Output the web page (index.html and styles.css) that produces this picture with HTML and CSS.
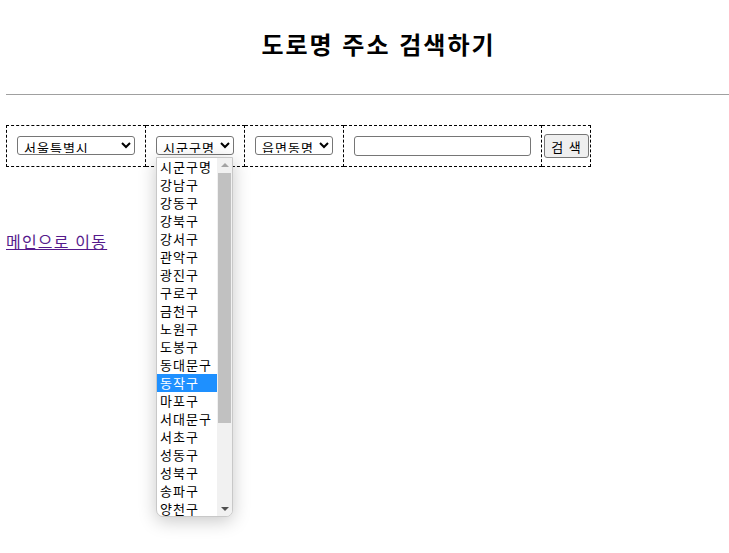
FILE: index.html
```html
<!DOCTYPE html>
<html lang="ko">
  <head>
    <meta charset="UTF-8" />
    <title>도로명 주소 검색하기</title>
    <link rel="stylesheet" href="styles.css">
  </head>
  <body>
    <h1>도로명 주소 검색하기</h1>
    <hr />

    <table class="search-table">
      <tr>
        <td>
          <select class="sel-city">
            <option>서울특별시</option>
          </select>
        </td>
        <td>
          <select class="sel-gu">
            <option>시군구명</option>
          </select>
        </td>
        <td>
          <select class="sel-dong">
            <option>읍면동명</option>
          </select>
        </td>
        <td>
          <input type="text" class="road-input" />
        </td>
        <td class="btn-cell">
          <button class="search-btn">검 색</button>
        </td>
      </tr>
    </table>

    <a href="#" class="main-link">메인으로 이동</a>

    <!-- open list of the 시군구 select -->
    <div class="dropdown">
      <ul class="dropdown-items">
        <li>시군구명</li>
        <li>강남구</li>
        <li>강동구</li>
        <li>강북구</li>
        <li>강서구</li>
        <li>관악구</li>
        <li>광진구</li>
        <li>구로구</li>
        <li>금천구</li>
        <li>노원구</li>
        <li>도봉구</li>
        <li>동대문구</li>
        <li class="active">동작구</li>
        <li>마포구</li>
        <li>서대문구</li>
        <li>서초구</li>
        <li>성동구</li>
        <li>성북구</li>
        <li>송파구</li>
        <li>양천구</li>
      </ul>
      <div class="scrollbar">
        <span class="arrow up"></span>
        <div class="thumb"></div>
        <span class="arrow down"></span>
      </div>
    </div>
  </body>
</html>
```

FILE: styles.css
```css
body {
  font-family: "Noto Sans CJK KR", "Noto Sans", sans-serif;
  margin: 0;
  padding: 0 0 0 6px;
  color: #000;
  background: #fff;
}

h1 {
  text-align: center;
  font-size: 24px;
  font-weight: bold;
  line-height: 30px;
  letter-spacing: 2px;
  margin: 0;
  padding: 29px 0 35px 22px;
}

hr {
  border: none;
  border-top: 1px solid #a0a0a0;
  height: 0;
  margin: 0 0 30px;
}

.search-table {
  border-collapse: collapse;
  border: 1px dashed #000;
}

.search-table td {
  border: 1px dashed #000;
  padding: 10px;
  vertical-align: middle;
}

.search-table td.btn-cell {
  padding: 1px 1px 1px 2px;
}

select {
  font-family: "Noto Sans CJK KR", sans-serif;
  font-size: 13px;
  letter-spacing: 1px;
  height: 19px;
  padding: 0 0 1px 2px;
  border: 1px solid #767676;
  border-radius: 3px;
  background: #fff;
  color: #000;
  display: block;
  margin-top: -1px;
}

.sel-city {
  width: 118px;
}

.sel-gu,
.sel-dong {
  width: 78px;
}

.road-input {
  display: block;
  width: 177px;
  height: 20px;
  box-sizing: border-box;
  border: 1px solid #767676;
  border-radius: 3px;
  padding: 0 4px;
}

.search-btn {
  display: block;
  font-family: "Noto Sans CJK KR", sans-serif;
  font-size: 13px;
  letter-spacing: 1px;
  width: 45px;
  height: 24px;
  padding: 0;
  border: 1px solid #767676;
  border-radius: 3px;
  background: #efefef;
  color: #000;
}

.main-link {
  display: inline-block;
  margin-top: 62px;
  font-size: 16px;
  letter-spacing: 1.2px;
  color: #551a8b;
}

.dropdown {
  position: absolute;
  left: 156px;
  top: 157px;
  width: 77px;
  height: 360px;
  box-sizing: border-box;
  background: #fff;
  border: 1px solid #c8c8c8;
  border-radius: 0 0 7px 7px;
  box-shadow: 0 4px 18px rgba(0, 0, 0, 0.22);
  display: flex;
  overflow: hidden;
}

.dropdown-items {
  list-style: none;
  margin: 0;
  padding: 0;
  flex: 1;
}

.dropdown-items li {
  height: 18px;
  line-height: 17px;
  font-size: 13px;
  letter-spacing: 1px;
  padding-left: 3px;
  white-space: nowrap;
}

.dropdown-items li.active {
  background: #1e90ff;
  color: #fff;
}

.scrollbar {
  width: 15px;
  background: #f1f1f1;
  display: flex;
  flex-direction: column;
  align-items: center;
}

.arrow {
  width: 0;
  height: 0;
  border-left: 4px solid transparent;
  border-right: 4px solid transparent;
  margin: 5px 0;
}

.arrow.up {
  border-bottom: 4px solid #a3a3a3;
}

.arrow.down {
  border-top: 4px solid #505050;
  margin-top: auto;
}

.thumb {
  width: 13px;
  height: 250px;
  background: #c1c1c1;
  margin-top: 1px;
}
```
